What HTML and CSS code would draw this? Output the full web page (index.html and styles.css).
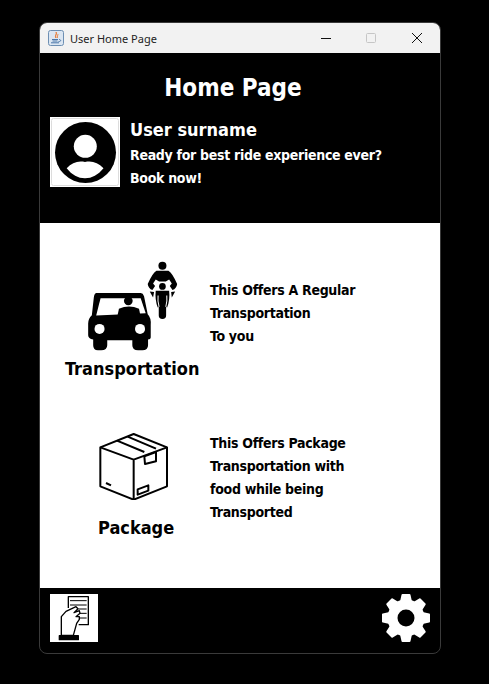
FILE: index.html
```html
<!DOCTYPE html>
<html>
<head>
<meta charset="utf-8"/>
<title>User Home Page</title>
<link rel="stylesheet" href="styles.css">
</head>
<body>
<div class="window">
  <div class="titlebar">
    <svg class="java" width="16" height="16" viewBox="0 0 16 16">
      <rect x="0.5" y="0.5" width="15" height="15" rx="2" fill="#dbe6f2" stroke="#6d8fb3"/>
      <path d="M8 2 C10 4 6 5 8 8 C6.500 6 9 5 8 2Z M10 4 C10 6 8.500 6 9.500 8" fill="#e8772e" stroke="#e8772e" stroke-width="0.8"/>
      <path d="M4 9.500 H10 M4.500 11 H9.500 M3 12.800 H11 M11 9.500 C13.500 9.500 13 12 10.500 11.500" fill="none" stroke="#4a76a8"/>
    </svg>
    <span class="wintitle">User Home Page</span>
    <div class="controls">
      <svg class="btn-min" width="10" height="10" viewBox="0 0 10 10"><path d="M0 5.500 H10" stroke="#111"/></svg>
      <svg class="btn-max" width="10" height="10" viewBox="0 0 10 10"><rect x="0.500" y="0.500" width="9" height="9" rx="1" fill="none" stroke="#c6c6c6"/></svg>
      <svg class="btn-close" width="10" height="10" viewBox="0 0 10 10"><path d="M0 0 L10 10 M10 0 L0 10" stroke="#111"/></svg>
    </div>
  </div>

  <div class="header">
    <h1>Home Page</h1>
    <div class="user">
      <div class="avatar">
        <svg width="70" height="70" viewBox="0 0 70 70">
          <rect width="70" height="70" fill="#fff"/>
          <rect x="1.500" y="1.500" width="67" height="67" rx="2" fill="#fff" stroke="#dcdcdc"/>
          <circle cx="35.500" cy="35.500" r="30.500" fill="#000"/>
          <circle cx="35.300" cy="29.300" r="11.500" fill="#fff"/>
          <path d="M16.700 51.300 C22 45.500 28 43.500 35 45 C42 43.500 48 45.500 53.500 51.300 C48 58 42 61.300 35 61.300 C28 61.300 22 58 16.700 51.300Z" fill="#fff"/>
        </svg>
      </div>
      <div class="greeting">
        <div class="username">User surname</div>
        <p class="tagline">Ready for best ride experience ever?</p>
        <p>Book now!</p>
      </div>
    </div>
  </div>

  <div class="main">
    <div class="offer offer-ride">
      <div class="offer-pic">
        <svg class="ride-icon" width="94" height="92" viewBox="80 30 280 275">
          <path d="M108 129 H240 Q247 129 250 138 L261 192 Q272 203 270 225 V262 Q270 268 262 268 V285 Q262 300 245 300 H232 Q215 300 215 285 V270 H140 V285 Q140 300 122 300 H112 Q98 300 98 285 V268 Q83 265 83 255 V220 Q83 205 94 195 L100 141 Q102 129 108 129Z" fill="#000"/>
          <path d="M120 144 H240 L255 189 L107 196Z" fill="#fff"/>
          <circle cx="203" cy="152" r="13" fill="#000"/>
          <path d="M170 200 L175 176 Q205 162 235 176 L240 200Z" fill="#000"/>
          <circle cx="117" cy="236" r="15" fill="#fff"/>
          <circle cx="238" cy="236" r="15" fill="#fff"/>
          <g transform="translate(255,24)" fill="#000">
            <circle cx="50" cy="23" r="12"/>
            <path d="M32 38 H68 Q80 45 94 78 Q92 92 80 96 L72 84 L78 76 L70 64 L60 70 H40 L30 64 L22 76 L28 84 L20 96 Q8 92 6 78 Q20 45 32 38Z"/>
            <circle cx="50" cy="85" r="10"/>
            <path d="M30 98 H70 Q73 125 64 148 L61 146 V172 Q61 182 50 182 Q39 182 39 172 V146 L36 148 Q27 125 30 98Z"/>
            <path d="M37 112 Q35 130 40 146 M63 112 Q65 130 60 146" fill="none" stroke="#fff" stroke-width="3"/>
            <path d="M12 100 L25 102 L22 118Z M88 100 L76 102 L78 118Z"/>
          </g>
        </svg>
        <div class="offer-name">Transportation</div>
      </div>
      <div class="offer-text">
        <p>This Offers A Regular</p>
        <p>Transportation</p>
        <p>To you</p>
      </div>
    </div>

    <div class="offer offer-package">
      <div class="offer-pic">
        <svg class="box-icon" width="70" height="68" viewBox="24 12 210 204">
          <g fill="none" stroke="#000" stroke-width="6" stroke-linejoin="round">
            <path d="M128 18 L228 58 V175 L128 215 L28 175 V58Z"/>
            <path d="M28 58 L128 95 L228 58 M128 95 V215"/>
            <path d="M78 38 L160 72 M110 26 L195 62"/>
            <path d="M160 85 L195 72 V100 L162 108Z"/>
            <path d="M140 184 L172 172 V188 L140 200Z"/>
            <path d="M45 165 L60 172"/>
          </g>
        </svg>
        <div class="offer-name">Package</div>
      </div>
      <div class="offer-text">
        <p>This Offers Package</p>
        <p>Transportation with</p>
        <p>food while being</p>
        <p>Transported</p>
      </div>
    </div>
  </div>

  <div class="footer">
    <svg class="history" width="48" height="48" viewBox="0 0 144 144">
      <rect width="144" height="144" fill="#fff"/>
      <g fill="none" stroke="#000" stroke-width="4" stroke-linejoin="round">
        <path d="M55 42 V8 H115 V92 H86"/>
        <path d="M60 20 H110 M60 33 H110 M85 45 H110 M85 58 H110 M88 72 H110" stroke-width="3"/>
        <path d="M34 124 V68 L48 52 L78 38 L84 44 L72 56 L88 50 L90 58 L78 68 L88 68 L88 76 L80 88 L70 124Z" fill="#fff"/>
        <path d="M28 125 H85 V137 H28Z" fill="#000"/>
      </g>
    </svg>
    <svg class="gear" width="48" height="48" viewBox="-24 -24 48 48">
      <g fill="#fff" stroke="#fff" stroke-width="2" stroke-linejoin="round">
        <path d="M-3.500 -23 H3.500 L5.500 -14 H-5.500Z"/>
        <path d="M-3.500 -23 H3.500 L5.500 -14 H-5.500Z" transform="rotate(45)"/>
        <path d="M-3.500 -23 H3.500 L5.500 -14 H-5.500Z" transform="rotate(90)"/>
        <path d="M-3.500 -23 H3.500 L5.500 -14 H-5.500Z" transform="rotate(135)"/>
        <path d="M-3.500 -23 H3.500 L5.500 -14 H-5.500Z" transform="rotate(180)"/>
        <path d="M-3.500 -23 H3.500 L5.500 -14 H-5.500Z" transform="rotate(225)"/>
        <path d="M-3.500 -23 H3.500 L5.500 -14 H-5.500Z" transform="rotate(270)"/>
        <path d="M-3.500 -23 H3.500 L5.500 -14 H-5.500Z" transform="rotate(315)"/>
      </g>
      <circle r="13.500" fill="none" stroke="#fff" stroke-width="10"/>
    </svg>
  </div>
</div>
</body>
</html>
```
FILE: styles.css
```css
html, body {
   margin: 0;
   background-color: black;
}

body {
  width: 489px;
  height: 684px;
  overflow: hidden;
  font-family: "DejaVu Sans", sans-serif;
  font-stretch: condensed;
  font-weight: bold;
}

.window {
  box-sizing: border-box;
  width: 402px;
  height: 632px;
  margin: 22px 0 0 39px;
  border: 1px solid #3a3a3a;
  border-radius: 8px;
  overflow: hidden;
  background-color: black;
}

.titlebar {
  display: flex;
  align-items: center;
  height: 30px;
  padding-left: 8px;
  background-color: #f2f2f2;
  font-family: "Noto Sans", sans-serif;
  font-stretch: normal;
  font-weight: normal;
  font-size: 11px;
  color: #222;
}

.wintitle {
  margin-left: 6px;
}

.controls {
  display: flex;
  align-items: center;
  margin-left: auto;
  padding-right: 18px;
}

.controls svg {
  display: block;
}

.btn-max {
  margin-left: 35px;
}

.btn-close {
  margin-left: 36px;
}

.header {
  height: 170px;
  box-sizing: border-box;
  padding: 19px 10px 0;
  color: white;
}

h1 {
  margin: 0 14px 12px 0;
  font-size: 24px;
  line-height: 33px;
  text-align: center;
}

.user {
  display: flex;
  gap: 10px;
}

.avatar svg {
  display: block;
}

.username {
  font-size: 18px;
  line-height: 26px;
}

.greeting p {
  margin: 0;
  font-size: 14px;
  line-height: 23px;
  letter-spacing: -0.3px;
}

.greeting .tagline {
  margin-top: 1px;
}

.main {
  height: 365px;
  background-color: white;
  color: black;
  display: flex;
  flex-direction: column;
}

.offer {
  display: flex;
}

.offer-ride {
  padding-top: 37px;
}

.offer-package {
  padding-top: 51px;
}

.offer-pic {
  width: 170px;
  box-sizing: border-box;
  flex: none;
}

.offer-pic svg {
  display: block;
}

.offer-name {
  font-size: 18px;
  line-height: 25px;
}

.ride-icon {
  margin-left: 47px;
}

.offer-ride .offer-name {
  margin: 4px 0 0 25px;
}

.box-icon {
  margin-left: 59px;
}

.offer-package .offer-name {
  margin: 15px 0 0 58px;
}

.offer-text p {
  margin: 0;
  font-size: 14px;
  line-height: 23px;
  letter-spacing: -0.3px;
}

.offer-ride .offer-text {
  padding-top: 19px;
}

.footer {
  display: flex;
  justify-content: space-between;
  height: 65px;
  padding: 6px 10px 0;
}

.footer svg {
  display: block;
}
```
